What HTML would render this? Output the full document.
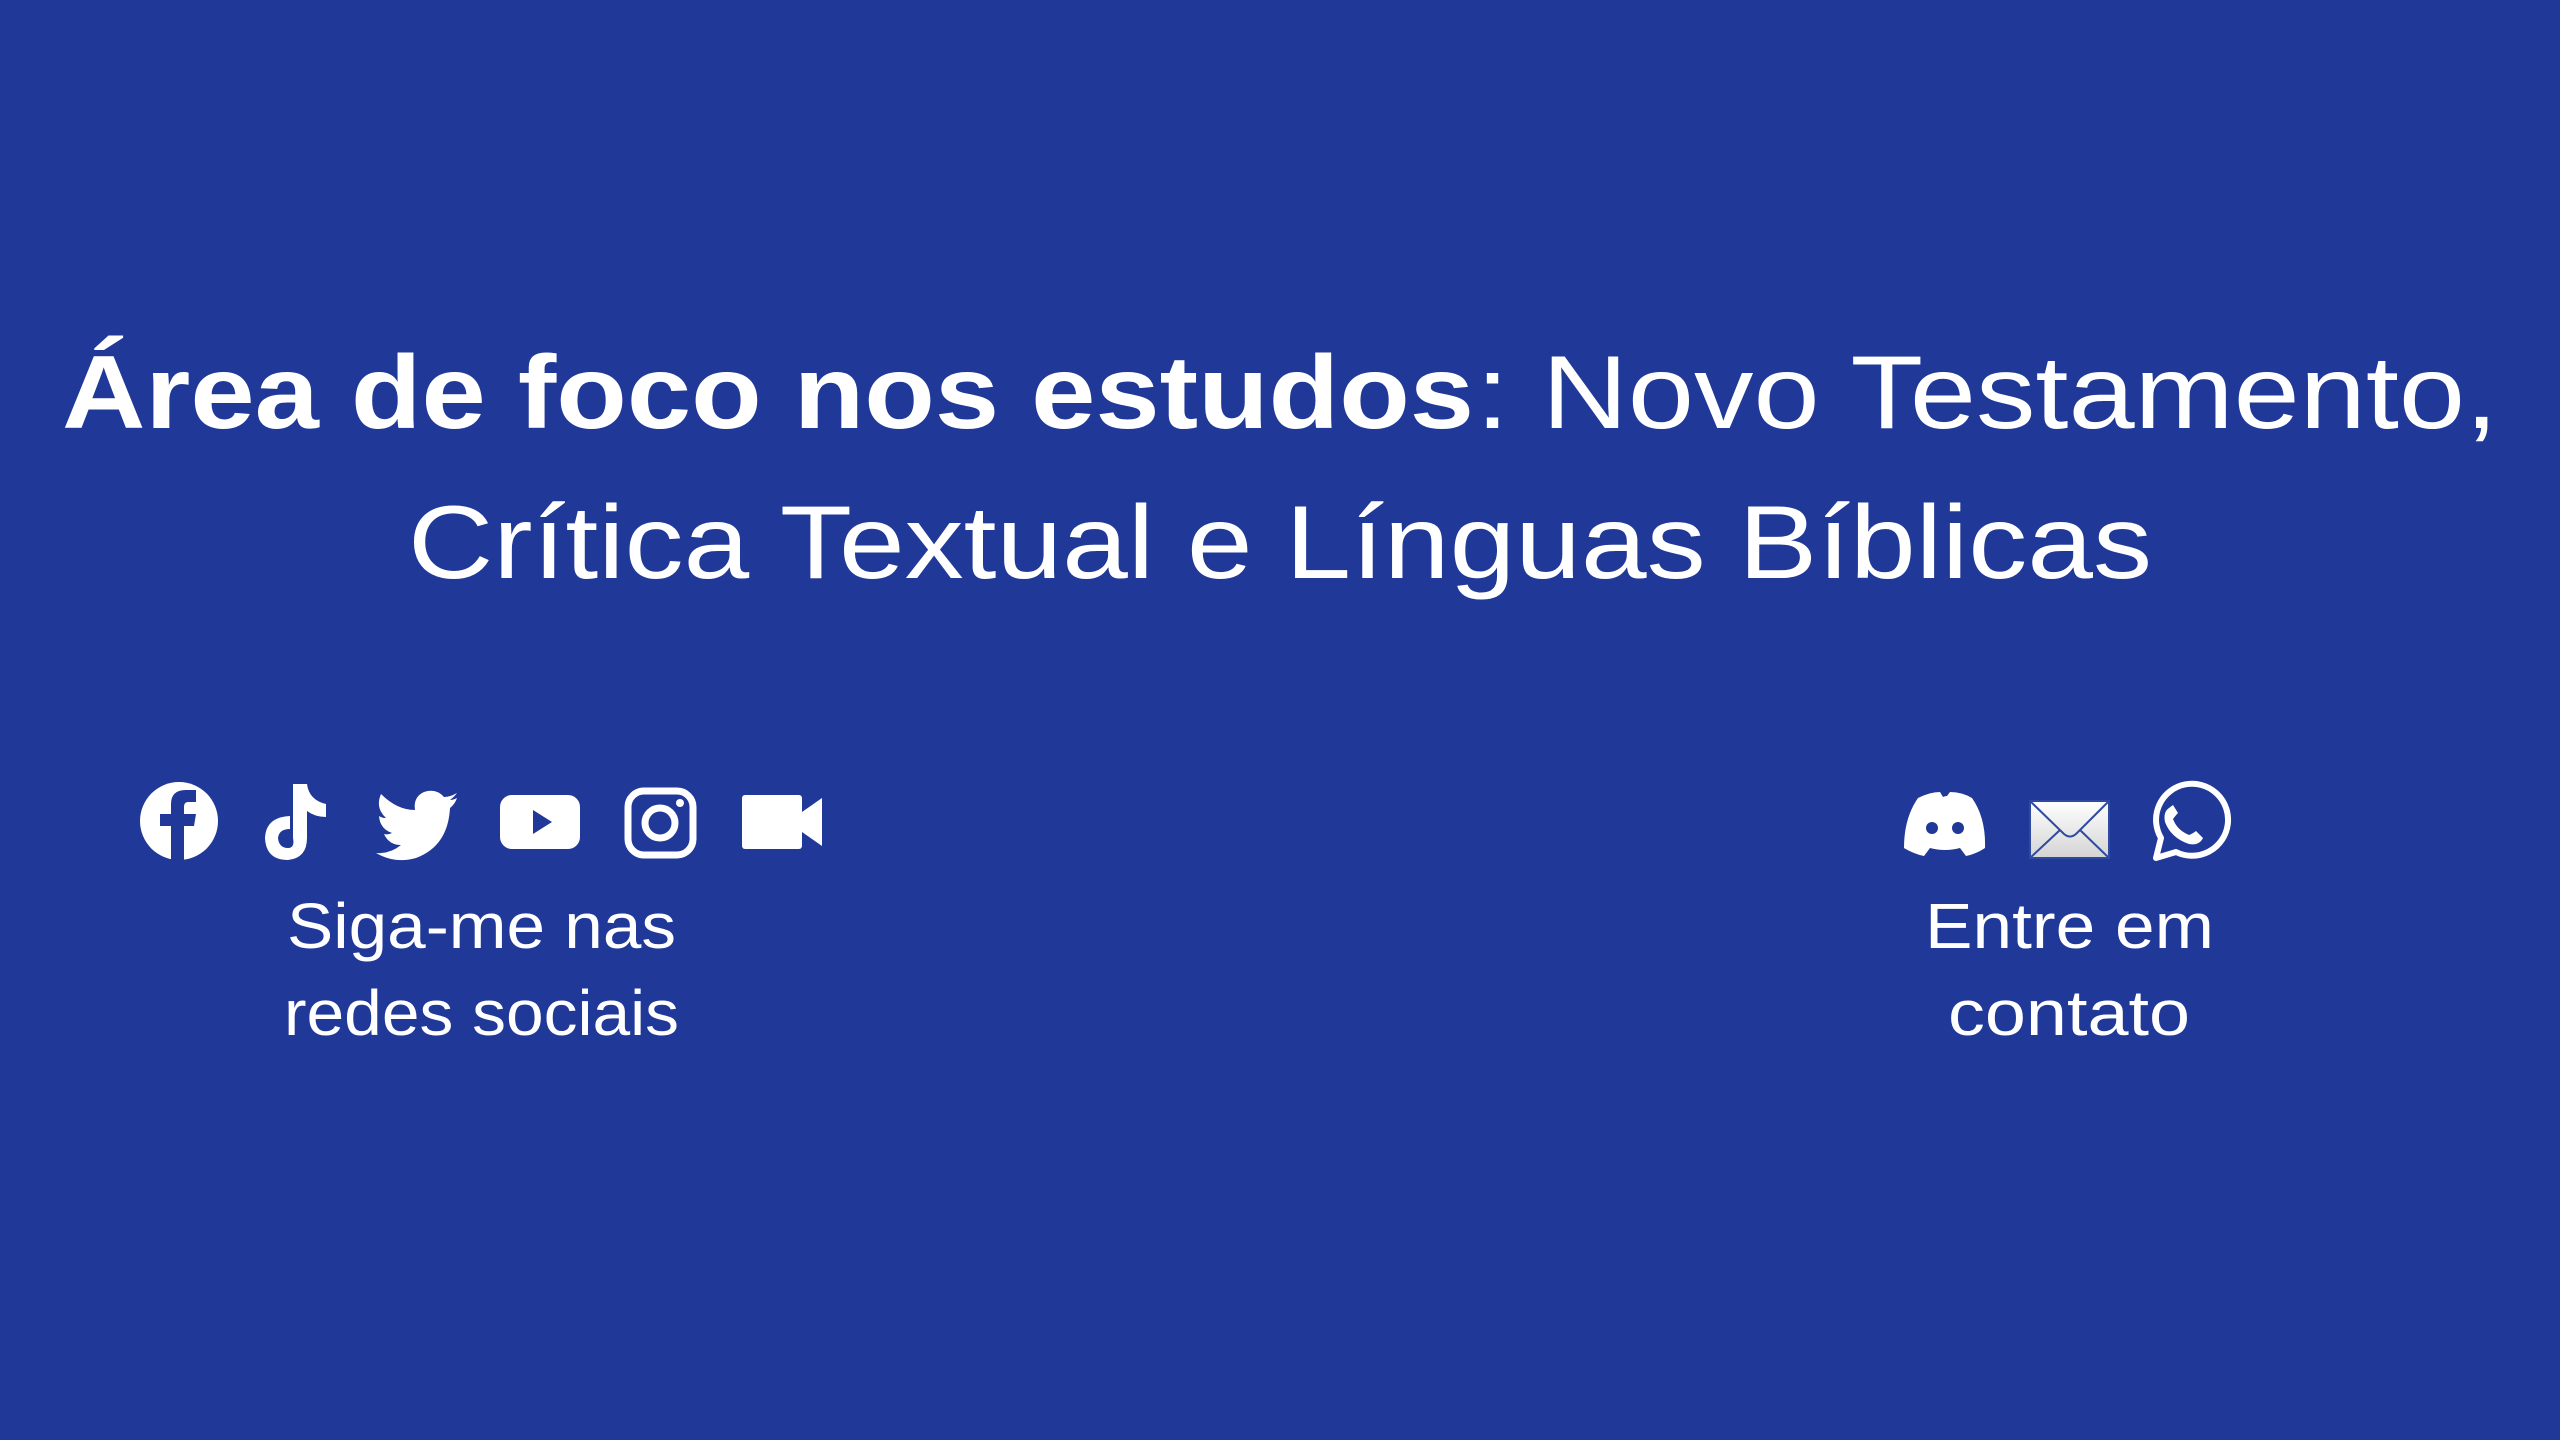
<!DOCTYPE html>
<html><head><meta charset="utf-8"><style>
html,body{margin:0;padding:0;width:2560px;height:1440px;overflow:hidden;background:#203898}
svg{position:absolute;left:0;top:0}
text{font-family:"Liberation Sans",sans-serif;fill:#fff}
</style></head><body>
<svg width="2560" height="1440" viewBox="0 0 2560 1440" xmlns="http://www.w3.org/2000/svg">
<defs><linearGradient id="mg" x1="0" y1="0" x2="0" y2="1"><stop offset="0" stop-color="#fff"/><stop offset="1" stop-color="#d4d4d4"/></linearGradient></defs>
<text x="62" y="428" font-size="104" font-weight="bold" textLength="1412" lengthAdjust="spacingAndGlyphs">Área de foco nos estudos</text>
<text x="1476" y="428" font-size="104" textLength="1022" lengthAdjust="spacingAndGlyphs">: Novo Testamento,</text>
<text x="408" y="578" font-size="104" textLength="1744" lengthAdjust="spacingAndGlyphs">Crítica Textual e Línguas Bíblicas</text>
<text x="287" y="948" font-size="64" textLength="389" lengthAdjust="spacingAndGlyphs">Siga-me nas</text>
<text x="284" y="1035" font-size="64" textLength="395" lengthAdjust="spacingAndGlyphs">redes sociais</text>
<text x="1925" y="948" font-size="64" textLength="289" lengthAdjust="spacingAndGlyphs">Entre em</text>
<text x="1948" y="1035" font-size="64" textLength="242" lengthAdjust="spacingAndGlyphs">contato</text>

<circle cx="179" cy="821" r="39" fill="#fff"/>
<path d="M171 861 V826 H160 V814 H171 V804 Q171 790 186 790 H196 V802 H188 Q184 802 184 807 V814 H196 L194 826 H184 V861 Z" fill="#203898"/>
<path d="M293 784 H307 Q309 800 326 804 V817 Q315 817 307 811 V838 Q307 858 288 860 Q266 860 265 838 Q266 817 290 816 V829 Q279 829 278 838 Q279 848 288 848 Q295 848 293 838 Z" fill="#fff"/>
<path d="M457 793 Q450 797 444 797 Q436 788 424 792 Q413 797 415 810 Q397 810 381 794 Q375 808 386 818 Q382 818 379 816 Q380 829 392 833 Q388 835 384 834 Q389 845 401 845 Q390 854 376 853 Q395 864 416 858 Q448 846 450 808 Q455 804 457 798 Q453 800 450 800 Q455 796 457 793 Z" fill="#fff"/>
<rect x="500" y="795" width="80" height="54" rx="12" fill="#fff"/>
<path d="M533 810 L552 822 L533 834 Z" fill="#203898"/>
<rect x="628" y="791" width="65" height="64" rx="16" fill="none" stroke="#fff" stroke-width="7"/>
<circle cx="660" cy="823" r="15" fill="none" stroke="#fff" stroke-width="7"/>
<circle cx="680" cy="803" r="4" fill="#fff"/>
<rect x="742" y="795" width="60" height="54" rx="3" fill="#fff"/>
<path d="M802 812 L822 798 V846 L802 832 Z" fill="#fff"/>
<path d="M1918 798 Q1930 792 1940 792 L1943 797 Q1945 796 1947 796 L1950 792 Q1962 792 1972 798 Q1986 818 1985 848 Q1976 854 1966 856 L1960 848 Q1945 852 1930 848 L1924 856 Q1914 854 1904 848 Q1904 818 1918 798 Z" fill="#fff"/>
<circle cx="1932" cy="828" r="6" fill="#203898"/><circle cx="1958" cy="828" r="6" fill="#203898"/>
<rect x="2030" y="801" width="79" height="57" fill="url(#mg)" stroke="#2d4aa0" stroke-width="2"/>
<path d="M2030 801 L2064 834 Q2070 839 2076 834 L2109 801 M2030 858 L2060 830 M2109 858 L2080 830" fill="none" stroke="#2d4aa0" stroke-width="2"/>
<g transform="translate(-7,0)">
<path d="M2163 858 L2168 838 A36 36 0 1 1 2183 852 Z" fill="none" stroke="#fff" stroke-width="6" stroke-linejoin="round"/>
<path d="M2176 808 Q2170 812 2172 822 Q2178 838 2196 844 Q2206 846 2210 838 L2203 831 Q2199 834 2196 835 Q2184 830 2180 819 Q2183 815 2185 813 L2180 805 Z" fill="#fff"/>
</g>
</svg>
</body></html>
